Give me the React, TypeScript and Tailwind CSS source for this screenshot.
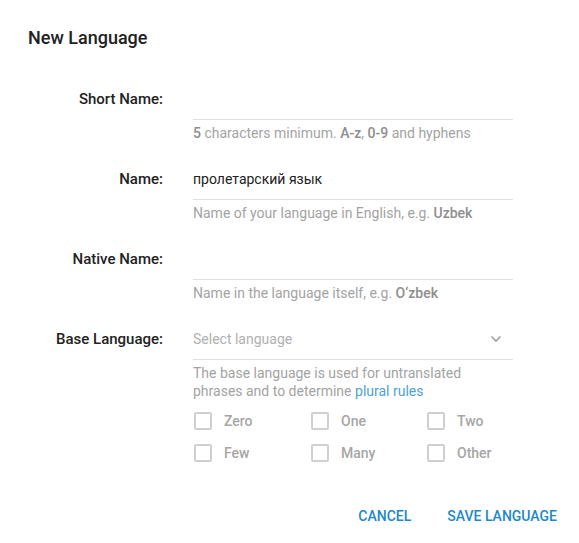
import React from "react";

const font = { fontFamily: "Roboto, 'Noto Sans', sans-serif" };

function Field({ label, value, placeholder, hint }: { label: string; value?: string; placeholder?: string; hint: React.ReactNode }) {
  return (
    <div className="grid grid-cols-[135px_320px] gap-x-[30px] mb-[16px]">
      <div className="h-[41px] flex items-center justify-end text-[15px] font-medium text-[#222]">{label}</div>
      <div className="h-[41px] flex items-center border-b border-[#e0e0e0] text-[14px] text-[#222]">
        {value ? <span>{value}</span> : <span className="text-[#b0b0b0]">{placeholder}</span>}
      </div>
      <div />
      <div className="mt-[3px] leading-[20px] text-[14px] text-[#a3a3a3]">{hint}</div>
    </div>
  );
}

function Check({ label }: { label: string }) {
  return (
    <div className="flex items-center h-[32px]">
      <span className="w-[18px] h-[18px] border-2 border-[#d0d0d0] rounded-[2px] ml-[1px]" />
      <span className="ml-[12px] text-[14px] font-medium text-[#a6a6a6]">{label}</span>
    </div>
  );
}

export default function App() {
  const B = ({ children }: { children: React.ReactNode }) => <span className="font-medium text-[#8e8e8e]">{children}</span>;
  return (
    <div className="w-[579px] h-[543px] bg-white" style={font}>
      <div className="pl-[28px] pt-[24px]">
        <h1 className="text-[18px] leading-[28px] font-medium text-[#212121]">New Language</h1>
        <div className="mt-[27px]">
          <Field
            label="Short Name:"
            hint={<><B>5</B> characters minimum. <B>A-z</B>, <B>0-9</B> and hyphens</>}
          />
          <Field
            label="Name:"
            value="пролетарский язык"
            hint={<>Name of your language in English, e.g. <B>Uzbek</B></>}
          />
          <Field
            label="Native Name:"
            hint={<>Name in the language itself, e.g. <B>O‘zbek</B></>}
          />
          <div className="grid grid-cols-[135px_320px] gap-x-[30px]">
            <div className="h-[41px] flex items-center justify-end text-[15px] font-medium text-[#222]">Base Language:</div>
            <div className="h-[41px] flex items-center justify-between border-b border-[#e0e0e0] text-[14px]">
              <span className="text-[#b0b0b0]">Select language</span>
              <svg width="12" height="8" viewBox="0 0 12 8" className="mr-[11px]">
                <path d="M1.5 1.5 L6 6 L10.5 1.5" fill="none" stroke="#a0a0a0" strokeWidth="1.6" />
              </svg>
            </div>
            <div />
            <div>
              <p className="mt-[4px] leading-[18px] text-[14px] text-[#a3a3a3]">
                The base language is used for untranslated phrases and to determine{" "}
                <span className="text-[#4ba3d6]">plural rules</span>
              </p>
              <div className="mt-[5px] grid grid-cols-[117px_116px_1fr]">
                <Check label="Zero" />
                <Check label="One" />
                <Check label="Two" />
                <Check label="Few" />
                <Check label="Many" />
                <Check label="Other" />
              </div>
            </div>
          </div>
        </div>
      </div>
      <div className="mt-[29px] flex justify-end pr-[22px] gap-[36px]">
        <button className="h-[36px] text-[14px] font-medium text-[#1e88c6] uppercase">Cancel</button>
        <button className="h-[36px] text-[14px] font-medium text-[#1e88c6] uppercase">Save Language</button>
      </div>
    </div>
  );
}
